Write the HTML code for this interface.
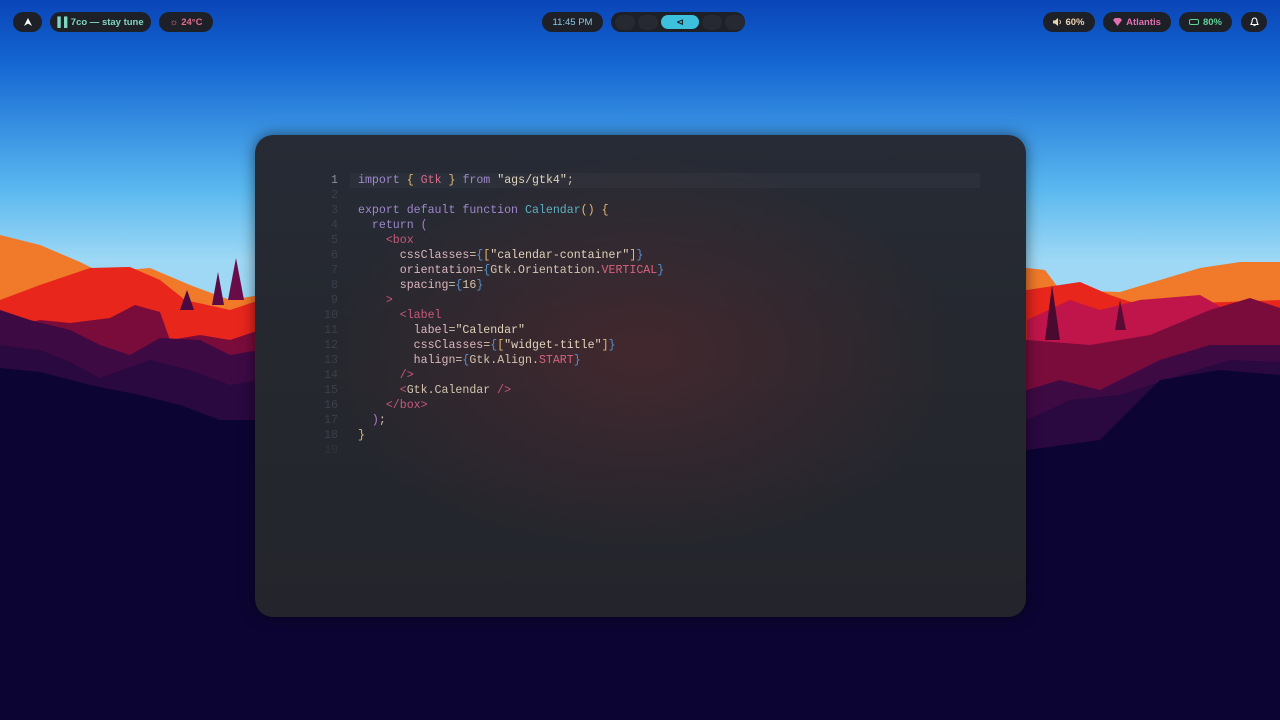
<!DOCTYPE html>
<html><head><meta charset="utf-8"><style>
*{margin:0;padding:0;box-sizing:border-box}
body{width:1280px;height:720px;overflow:hidden;position:relative;background:#0a0530;font-family:"Liberation Sans",sans-serif}
#bg{position:absolute;left:0;top:0}
.pill{position:absolute;top:12px;height:20px;border-radius:10px;background:#1d2027;font-size:9.5px;font-weight:bold;display:flex;align-items:center;justify-content:center;white-space:nowrap}
.win{position:absolute;left:255px;top:135px;width:771px;height:482px;border-radius:18px;background:radial-gradient(ellipse 320px 200px at 50% 45%,rgba(95,40,45,.5),rgba(0,0,0,0)),linear-gradient(#262b35,#25282f 40%,#24252c);box-shadow:0 0 14px rgba(0,0,0,.55);overflow:hidden}
.code{position:absolute;left:0;top:38px;font-family:"Liberation Mono",monospace;font-size:11.6px;line-height:15px;color:#d3c4ad}
.ln{position:absolute;left:60px;width:23px;text-align:right;color:#3a3f4a}
.l{position:absolute;left:103px;white-space:pre}
.hl{position:absolute;left:95px;top:0;width:630px;height:15px;background:rgba(255,255,255,.03)}
.k{color:#9f88cc}.t{color:#d86a86}.b{color:#e2b86e}.s{color:#e2d3bb}.f{color:#5cb0c2}.g{color:#c9587a}.a{color:#dcb8bd}.c{color:#5592d0}.p{color:#b878d0}.n{color:#d8627e}
</style></head><body>
<svg id="bg" width="1280" height="720" viewBox="0 0 1280 720">
<defs><linearGradient id="sky" x1="0" y1="0" x2="0" y2="1">
<stop offset="0" stop-color="#0a45b8"/><stop offset=".15" stop-color="#1466d2"/><stop offset=".45" stop-color="#5ab8ef"/><stop offset=".62" stop-color="#9ed8f5"/></linearGradient></defs>
<rect width="1280" height="420" fill="url(#sky)"/>
<polygon fill="#f07a2a" points="0,235 40,245 80,262 100,272 150,268 190,285 230,300 260,295 1027,268 1045,270 1060,290 1120,292 1150,283 1200,268 1240,262 1280,262 1280,400 0,400"/>
<polygon fill="#e8261c" points="0,300 40,285 90,268 130,267 160,280 185,300 230,310 260,300 1027,290 1060,285 1080,282 1110,295 1140,305 1280,300 1280,420 0,420"/>
<polygon fill="#c0154a" points="1027,320 1070,300 1100,310 1140,300 1200,295 1240,318 1280,310 1280,420 1027,420"/>
<polygon fill="#7a0c3c" points="0,330 40,320 70,323 110,318 135,305 160,312 170,340 200,335 230,340 260,330 1027,340 1090,345 1150,335 1210,310 1250,298 1280,308 1280,440 0,440"/>
<polygon fill="#3e0a44" points="0,310 30,320 70,330 100,345 130,355 160,338 200,340 230,355 260,350 1027,390 1060,380 1100,390 1160,360 1210,345 1280,345 1280,500 0,500"/>
<polygon fill="#2a0840" points="0,345 40,350 70,362 100,378 150,360 190,370 230,385 260,380 1027,420 1070,400 1120,395 1180,375 1230,360 1280,362 1280,520 0,520"/>
<polygon fill="#0c0533" points="0,368 40,372 90,385 140,395 180,405 220,420 260,420 1027,450 1100,440 1160,380 1220,370 1280,375 1280,720 0,720"/>
<polygon fill="#4a0a40" points="180,310 187,290 194,310"/><polygon fill="#6a0c48" points="228,300 236,258 244,300"/><polygon fill="#5a0a45" points="212,305 218,272 224,305"/>
<polygon fill="#4a0a30" points="1045,340 1052,285 1060,340"/><polygon fill="#5a0a35" points="1115,330 1120,300 1126,330"/>
</svg>
<div class="pill" style="left:13px;width:29px"><svg width="10" height="10" viewBox="0 0 10 10"><path d="M5 1 L9 9 L5 6.5 L1 9 Z" fill="#fff"/></svg></div>
<div class="pill" style="left:50px;width:101px;color:#7fd6c2">▌▌7co — stay tune</div>
<div class="pill" style="left:159px;width:54px;color:#e06c8a"><span style="font-weight:normal;margin-right:3px">☼</span>24°C</div>
<div class="pill" style="left:542px;width:61px;color:#8fc8e8;font-weight:normal">11:45 PM</div>
<div class="pill" style="left:611px;width:134px;justify-content:flex-start;padding-left:4px;gap:3px">
<span style="width:20px;height:15px;border-radius:8px;background:#262932"></span><span style="width:20px;height:15px;border-radius:8px;background:#262932"></span><span style="width:39px;height:14px;border-radius:7px;background:#3cc0dc;color:#1d2027;font-size:9px;text-align:center;line-height:14px">⊲</span><span style="width:20px;height:15px;border-radius:8px;background:#262932"></span><span style="width:20px;height:15px;border-radius:8px;background:#262932"></span></div>
<div class="pill" style="left:1043px;width:52px;color:#ecd3b2"><svg width="9" height="8" viewBox="0 0 9 8" style="margin-right:3px"><path d="M0 2.5h2l3-2.5v8l-3-2.5h-2z" fill="#ecd3b2"/><path d="M6.5 2a2.5 2.5 0 0 1 0 4" stroke="#ecd3b2" fill="none"/></svg>60%</div>
<div class="pill" style="left:1103px;width:68px;color:#e070b0"><svg width="9" height="8" viewBox="0 0 9 8" style="margin-right:4px"><path d="M0 2L2 0H7L9 2L4.5 8Z" fill="#e070b0"/></svg>Atlantis</div>
<div class="pill" style="left:1179px;width:53px;color:#5fd395"><span style="display:inline-block;width:10px;height:6px;border:1.5px solid #5fd395;border-radius:2px;margin-right:4px"></span>80%</div>
<div class="pill" style="left:1241px;width:26px"><svg width="9" height="10" viewBox="0 0 9 10"><path d="M4.5 1C2.5 1 2 3 2 5L1 7.5H8L7 5C7 3 6.5 1 4.5 1Z" stroke="#fff" fill="none" stroke-width="1.1"/><path d="M3.5 8.6h2" stroke="#fff"/></svg></div>
<div class="win"><div class="code">
<div class="hl"></div>
<div class="ln" style="top:0;color:#8a909c">1</div><div class="l" style="top:0"><span class="k">import</span> <span class="b">{</span> <span class="t">Gtk</span> <span class="b">}</span> <span class="k">from</span> <span class="s">"ags/gtk4"</span>;</div>
<div class="ln" style="top:15px">2</div>
<div class="ln" style="top:30px">3</div><div class="l" style="top:30px"><span class="k">export default function</span> <span class="f">Calendar</span><span class="b">()</span> <span class="b">{</span></div>
<div class="ln" style="top:45px">4</div><div class="l" style="top:45px">  <span class="k">return</span> <span class="p">(</span></div>
<div class="ln" style="top:60px">5</div><div class="l" style="top:60px">    <span class="g">&lt;box</span></div>
<div class="ln" style="top:75px">6</div><div class="l" style="top:75px">      <span class="a">cssClasses</span>=<span class="c">{</span><span class="b">[</span><span class="s">"calendar-container"</span><span class="b">]</span><span class="c">}</span></div>
<div class="ln" style="top:90px">7</div><div class="l" style="top:90px">      <span class="a">orientation</span>=<span class="c">{</span>Gtk.Orientation.<span class="n">VERTICAL</span><span class="c">}</span></div>
<div class="ln" style="top:105px">8</div><div class="l" style="top:105px">      <span class="a">spacing</span>=<span class="c">{</span>16<span class="c">}</span></div>
<div class="ln" style="top:120px">9</div><div class="l" style="top:120px">    <span class="g">&gt;</span></div>
<div class="ln" style="top:135px">10</div><div class="l" style="top:135px">      <span class="g">&lt;label</span></div>
<div class="ln" style="top:150px">11</div><div class="l" style="top:150px">        <span class="a">label</span>=<span class="s">"Calendar"</span></div>
<div class="ln" style="top:165px">12</div><div class="l" style="top:165px">        <span class="a">cssClasses</span>=<span class="c">{</span><span class="b">[</span><span class="s">"widget-title"</span><span class="b">]</span><span class="c">}</span></div>
<div class="ln" style="top:180px">13</div><div class="l" style="top:180px">        <span class="a">halign</span>=<span class="c">{</span>Gtk.Align.<span class="n">START</span><span class="c">}</span></div>
<div class="ln" style="top:195px">14</div><div class="l" style="top:195px">      <span class="g">/&gt;</span></div>
<div class="ln" style="top:210px">15</div><div class="l" style="top:210px">      <span class="g">&lt;</span>Gtk.Calendar <span class="g">/&gt;</span></div>
<div class="ln" style="top:225px">16</div><div class="l" style="top:225px">    <span class="g">&lt;/box&gt;</span></div>
<div class="ln" style="top:240px">17</div><div class="l" style="top:240px">  <span class="p">)</span>;</div>
<div class="ln" style="top:255px">18</div><div class="l" style="top:255px"><span class="b">}</span></div>
<div class="ln" style="top:270px;color:#30343d">19</div>
</div></div>
</body></html>
